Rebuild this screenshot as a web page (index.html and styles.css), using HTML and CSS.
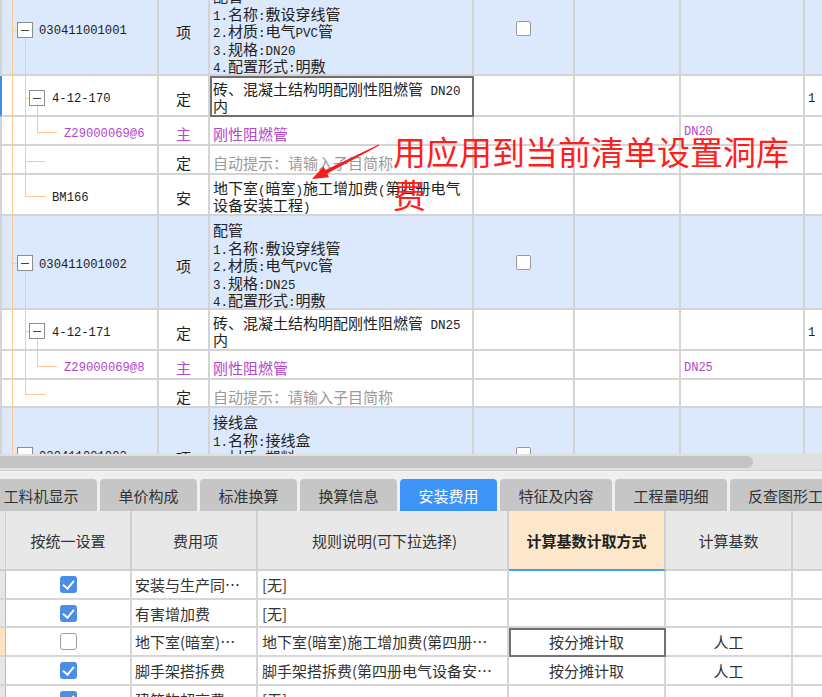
FILE: index.html
```html
<!DOCTYPE html>
<html lang="zh-CN">
<head>
<meta charset="utf-8">
<title>安装费用</title>
<link rel="stylesheet" href="styles.css">
</head>
<body>
<div class="app">
  <div class="grid-wrap">
    <div class="grid">
      <div class="row blue h94">
        <div class="c c1"><span class="code l1">030411001001</span></div>
        <div class="c c2">项</div>
        <div class="c c3">配管<br><i class="a">1.</i>名称<i class="a">:</i>敷设穿线管<br><i class="a">2.</i>材质<i class="a">:</i>电气<i class="a">PVC</i>管<br><i class="a">3.</i>规格<i class="a">:DN20</i><br><i class="a">4.</i>配置形式<i class="a">:</i>明敷</div>
        <div class="c c4"><span class="cb"></span></div>
        <div class="c c5"></div>
        <div class="c c6"></div>
        <div class="c c7"></div>
      </div>
      <div class="row h41">
        <div class="c c1 mark"><span class="code l2">4-12-170</span></div>
        <div class="c c2">定</div>
        <div class="c c3 two sel">砖、混凝土结构明配刚性阻燃管<i class="a"> DN20</i>内</div>
        <div class="c c4"></div>
        <div class="c c5"></div>
        <div class="c c6"></div>
        <div class="c c7"><span class="code">1</span></div>
      </div>
      <div class="row h29">
        <div class="c c1"><span class="code l3 purple">Z29000069@6</span></div>
        <div class="c c2 purple">主</div>
        <div class="c c3 one purple">刚性阻燃管</div>
        <div class="c c4"></div>
        <div class="c c5"></div>
        <div class="c c6 top"><span class="code small purple">DN20</span></div>
        <div class="c c7"></div>
      </div>
      <div class="row h29">
        <div class="c c1"></div>
        <div class="c c2">定</div>
        <div class="c c3 one hint">自动提示：请输入子目简称</div>
        <div class="c c4"></div>
        <div class="c c5"></div>
        <div class="c c6"></div>
        <div class="c c7"></div>
      </div>
      <div class="row h41">
        <div class="c c1"><span class="code l2">BM166</span></div>
        <div class="c c2">安</div>
        <div class="c c3 two">地下室<i class="a">(</i>暗室<i class="a">)</i>施工增加费<i class="a">(</i>第四册电气设备安装工程<i class="a">)</i></div>
        <div class="c c4"></div>
        <div class="c c5"></div>
        <div class="c c6"></div>
        <div class="c c7"></div>
      </div>
      <div class="row blue h94">
        <div class="c c1"><span class="code l1">030411001002</span></div>
        <div class="c c2">项</div>
        <div class="c c3">配管<br><i class="a">1.</i>名称<i class="a">:</i>敷设穿线管<br><i class="a">2.</i>材质<i class="a">:</i>电气<i class="a">PVC</i>管<br><i class="a">3.</i>规格<i class="a">:DN25</i><br><i class="a">4.</i>配置形式<i class="a">:</i>明敷</div>
        <div class="c c4"><span class="cb"></span></div>
        <div class="c c5"></div>
        <div class="c c6"></div>
        <div class="c c7"></div>
      </div>
      <div class="row h41">
        <div class="c c1"><span class="code l2">4-12-171</span></div>
        <div class="c c2">定</div>
        <div class="c c3 two">砖、混凝土结构明配刚性阻燃管<i class="a"> DN25</i>内</div>
        <div class="c c4"></div>
        <div class="c c5"></div>
        <div class="c c6"></div>
        <div class="c c7"><span class="code">1</span></div>
      </div>
      <div class="row h29">
        <div class="c c1"><span class="code l3 purple">Z29000069@8</span></div>
        <div class="c c2 purple">主</div>
        <div class="c c3 one purple">刚性阻燃管</div>
        <div class="c c4"></div>
        <div class="c c5"></div>
        <div class="c c6"><span class="code small purple">DN25</span></div>
        <div class="c c7"></div>
      </div>
      <div class="row h28">
        <div class="c c1"></div>
        <div class="c c2">定</div>
        <div class="c c3 one hint">自动提示：请输入子目简称</div>
        <div class="c c4"></div>
        <div class="c c5"></div>
        <div class="c c6"></div>
        <div class="c c7"></div>
      </div>
      <div class="row blue h94">
        <div class="c c1"><span class="code l1">030411001003</span></div>
        <div class="c c2">项</div>
        <div class="c c3">接线盒<br><i class="a">1.</i>名称<i class="a">:</i>接线盒<br><i class="a">2.</i>材质<i class="a">:</i>塑料<br><i class="a">3.</i>规格<i class="a">:86H</i><br><i class="a">4.</i>安装形式<i class="a">:</i>暗装</div>
        <div class="c c4"><span class="cb"></span></div>
        <div class="c c5"></div>
        <div class="c c6"></div>
        <div class="c c7"></div>
      </div>
    </div>

    <svg class="tree" width="160" height="454" viewBox="0 0 160 454">
      <g stroke="#fdc98f" stroke-width="1" fill="none">
        <path d="M12.5 0V454"/>
        <path d="M12 30.5H17"/>
        <path d="M25.5 38V196.5"/>
        <path d="M25 98.5H29"/>
        <path d="M37.5 106V132.5H57"/>
        <path d="M25 161.5H45"/>
        <path d="M25 196.5H45"/>
        <path d="M12 263.5H17"/>
        <path d="M25.5 271V394.5"/>
        <path d="M25 331.5H29"/>
        <path d="M37.5 339V366.5H57"/>
        <path d="M25 394.5H45"/>
        <path d="M12 455.5H17"/>
      </g>
      <g fill="#fff" stroke="#8d8d8d" stroke-width="1">
        <rect x="17.5" y="22.5" width="15" height="15"/>
        <rect x="29.5" y="90.5" width="15" height="15"/>
        <rect x="17.5" y="255.5" width="15" height="15"/>
        <rect x="29.5" y="323.5" width="15" height="15"/>
        <rect x="17.5" y="447.5" width="15" height="15"/>
      </g>
      <g stroke="#444" stroke-width="1">
        <path d="M21 30.5H29"/>
        <path d="M33 98.5H41"/>
        <path d="M21 263.5H29"/>
        <path d="M33 331.5H41"/>
      </g>
    </svg>

    <svg class="arrow" width="822" height="454" viewBox="0 0 822 454">
      <polygon fill="#f31d1d" points="378.8,144.6 325.4,170.0 323.6,166.4 312,179 329.0,177.2 327.2,173.6 379.2,145.4"/>
    </svg>
    <div class="note">用应用到当前清单设置洞库费</div>
  </div>

  <div class="hscroll"><div class="thumb"></div></div>

  <div class="tabbar">
    <div class="tab w5 first">工料机显示</div>
    <div class="tab">单价构成</div>
    <div class="tab">标准换算</div>
    <div class="tab">换算信息</div>
    <div class="tab active">安装费用</div>
    <div class="tab w5">特征及内容</div>
    <div class="tab w5">工程量明细</div>
    <div class="tab w6">反查图形工程量</div>
  </div>

  <div class="fees">
    <div class="frow fhead">
      <div class="f f0"></div>
      <div class="f f1 ctr">按统一设置</div>
      <div class="f f2 ctr">费用项</div>
      <div class="f f3 ctr">规则说明(可下拉选择)</div>
      <div class="f f4 ctr hl">计算基数计取方式</div>
      <div class="f f5 ctr">计算基数</div>
      <div class="f f6"></div>
    </div>
    <div class="frow h29">
      <div class="f f0"></div>
      <div class="f f1 ctr"><span class="chk on"></span></div>
      <div class="f f2">安装与生产同…</div>
      <div class="f f3">[无]</div>
      <div class="f f4 ctr"></div>
      <div class="f f5 ctr"></div>
      <div class="f f6"></div>
    </div>
    <div class="frow h28">
      <div class="f f0"></div>
      <div class="f f1 ctr"><span class="chk on"></span></div>
      <div class="f f2">有害增加费</div>
      <div class="f f3">[无]</div>
      <div class="f f4 ctr"></div>
      <div class="f f5 ctr"></div>
      <div class="f f6"></div>
    </div>
    <div class="frow h29">
      <div class="f f0 cur"></div>
      <div class="f f1 ctr"><span class="chk"></span></div>
      <div class="f f2">地下室(暗室)…</div>
      <div class="f f3">地下室(暗室)施工增加费(第四册…</div>
      <div class="f f4 ctr fsel">按分摊计取</div>
      <div class="f f5 ctr">人工</div>
      <div class="f f6"></div>
    </div>
    <div class="frow h29">
      <div class="f f0"></div>
      <div class="f f1 ctr"><span class="chk on"></span></div>
      <div class="f f2">脚手架搭拆费</div>
      <div class="f f3">脚手架搭拆费(第四册电气设备安…</div>
      <div class="f f4 ctr">按分摊计取</div>
      <div class="f f5 ctr">人工</div>
      <div class="f f6"></div>
    </div>
    <div class="frow h29">
      <div class="f f0"></div>
      <div class="f f1 ctr"><span class="chk on"></span></div>
      <div class="f f2">建筑物超高费</div>
      <div class="f f3">[无]</div>
      <div class="f f4 ctr"></div>
      <div class="f f5 ctr"></div>
      <div class="f f6"></div>
    </div>
  </div>
</div>
</body>
</html>
```

FILE: styles.css
```css
html, body {
  margin: 0;
  padding: 0;
  background: #fff;
}
body {
  width: 822px;
  height: 697px;
  overflow: hidden;
  font-family: "Noto Sans CJK SC", "Noto Sans", sans-serif;
  color: #222;
}
.app {
  width: 822px;
  height: 697px;
  overflow: hidden;
}

/* ---------- top grid ---------- */
.grid-wrap {
  position: relative;
  height: 454px;
  overflow: hidden;
}
.grid {
  margin-top: -18px;
  width: 900px;
  font-size: 15px;
}
.row {
  display: flex;
}
.row.blue {
  background: #dce9fc;
}
.h94 { height: 94px; }
.h41 { height: 41px; }
.h29 { height: 29px; }
.h28 { height: 28px; }

.c {
  flex: none;
  box-sizing: border-box;
  height: 100%;
  border-right: 2px solid #d4d4d4;
  border-bottom: 2px solid #d4d4d4;
  display: flex;
  align-items: center;
  padding-top: 6px;
  white-space: nowrap;
  overflow: hidden;
}
.c1 {
  width: 159px;
  border-left: 2px solid #d4d4d4;
}
.c1.mark {
  border-left-color: #3c8fe8;
}
.c2 {
  width: 51px;
  justify-content: center;
}
.c3 {
  width: 264px;
  display: block;
  white-space: normal;
  padding: 5px 3px 0 3px;
  line-height: 17.5px;
}
.c3.two {
  padding-top: 5px;
  line-height: 16.5px;
}
.c3.one {
  padding-top: 8px;
}
.c3.sel {
  outline: 2px solid #6f6f6f;
  outline-offset: -2px;
}
.c4 {
  width: 101px;
  justify-content: center;
  padding-top: 0;
}
.c5 { width: 106px; }
.c6 {
  width: 124px;
  padding-left: 3px;
}
.c6.top {
  align-items: flex-start;
  padding-top: 8px;
}
.c7 {
  width: 80px;
  padding-left: 3px;
}

.a {
  font-style: normal;
  font-family: "Liberation Mono", monospace;
  font-size: 12.5px;
  line-height: 0;
}
.code {
  font-family: "Liberation Mono", monospace;
  font-size: 12.2px;
  color: #222;
}
.code.small {
  font-size: 12px;
}
.l1 { padding-left: 37px; }
.l2 { padding-left: 50px; }
.l3 { padding-left: 62px; }
.purple, .code.purple {
  color: #b347c9;
}
.hint {
  color: #9a9a9a;
}
.cb {
  display: block;
  width: 13px;
  height: 13px;
  border: 1px solid #9a9a9a;
  border-radius: 2px;
  background: #fff;
}

/* overlays */
.tree {
  position: absolute;
  left: 0;
  top: 0;
}
.arrow {
  position: absolute;
  left: 0;
  top: 0;
  pointer-events: none;
}
.note {
  position: absolute;
  left: 393px;
  top: 130px;
  width: 400px;
  font-size: 33px;
  line-height: 43px;
  color: #ff1e1e;
  font-family: "Noto Sans CJK SC", sans-serif;
}

/* ---------- scrollbar ---------- */
.hscroll {
  height: 16px;
  box-sizing: border-box;
  padding: 2px 0;
  background: #e0e0e0;
}
.thumb {
  width: 753px;
  height: 12px;
  border-radius: 0 6px 6px 0;
  background: #c4c4c4;
}

/* ---------- tabs ---------- */
.tabbar {
  height: 41px;
  box-sizing: border-box;
  border-top: 1px solid #d2d2d2;
  background: #efefef;
  padding-top: 8px;
  display: flex;
  gap: 3px;
  overflow: hidden;
}
.tab {
  flex: none;
  width: 97px;
  height: 32px;
  border-radius: 4px 4px 0 0;
  background: #c6c6c6;
  color: #333;
  font-size: 15px;
  display: flex;
  align-items: center;
  justify-content: center;
}
.tab.w5 { width: 112px; }
.tab.w6 {
  width: 140px;
  justify-content: flex-start;
  padding-left: 18px;
  box-sizing: border-box;
}
.tab.first { margin-left: -15px; }
.tab.active {
  background: #3d94f6;
  color: #fff;
}

/* ---------- fee table ---------- */
.fees {
  font-size: 15px;
  color: #333;
}
.frow {
  display: flex;
}
.fhead {
  height: 60px;
  background: #e8e8e8;
}
.f {
  flex: none;
  box-sizing: border-box;
  height: 100%;
  border-right: 2px solid #d6d6d6;
  border-bottom: 2px solid #d6d6d6;
  display: flex;
  align-items: center;
  white-space: nowrap;
  overflow: hidden;
}
.fhead .f {
  border-right-color: #cfcfcf;
  border-bottom-color: #d0d0d0;
}
.ctr {
  justify-content: center;
}
.f0 {
  width: 6px;
  background: #e6e6e6;
  border-right: 1px solid #bdbdbd;
}
.f0.cur {
  background: #fde3c2;
}
.f1 { width: 126px; }
.f2 { width: 126px; padding-left: 3px; }
.f3 { width: 251px; padding-left: 4px; }
.f4 { width: 157px; }
.f5 { width: 127px; }
.f6 { width: 60px; }
.fhead .hl {
  background: #fde7ca;
  font-weight: bold;
  color: #222;
  border-bottom: 2px solid #4a9cf0;
}
.fsel {
  outline: 2px solid #727272;
  outline-offset: -2px;
}
.chk {
  display: block;
  box-sizing: border-box;
  width: 17px;
  height: 17px;
  border-radius: 3px;
  border: 1px solid #9c9c9c;
  background: #fff;
  position: relative;
}
.chk.on {
  border: none;
  background: #4a8ee8;
}
.chk.on::after {
  content: "";
  position: absolute;
  left: 5px;
  top: 2px;
  width: 5px;
  height: 9px;
  border-right: 2px solid #fff;
  border-bottom: 2px solid #fff;
  transform: rotate(40deg);
}
```
